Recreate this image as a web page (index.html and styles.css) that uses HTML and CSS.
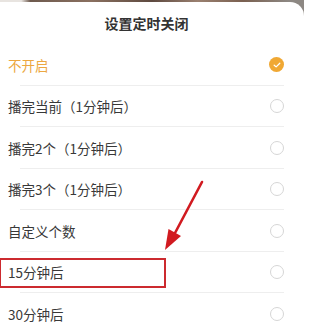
FILE: index.html
```html
<!DOCTYPE html>
<html lang="zh-CN">
<head>
<meta charset="utf-8">
<title>设置定时关闭</title>
<link rel="stylesheet" href="styles.css">
</head>
<body>
<div class="screen">
  <div class="backdrop"></div>
  <div class="sheet">
    <h1 class="title">设置定时关闭</h1>
    <ul class="options">
      <li class="option active"><span class="label">不开启</span><span class="radio checked"><svg viewBox="0 0 16 16" width="10" height="10"><path d="M3.5 8.3 L6.6 11 L12.5 5.2" fill="none" stroke="#fff" stroke-width="2" stroke-linecap="round" stroke-linejoin="round"/></svg></span></li>
      <li class="option"><span class="label">播完当前（1分钟后）</span><span class="radio"></span></li>
      <li class="option"><span class="label">播完2个（1分钟后）</span><span class="radio"></span></li>
      <li class="option"><span class="label">播完3个（1分钟后）</span><span class="radio"></span></li>
      <li class="option"><span class="label">自定义个数</span><span class="radio"></span></li>
      <li class="option"><span class="label">15分钟后</span><span class="radio"></span></li>
      <li class="option"><span class="label">30分钟后</span><span class="radio"></span></li>
    </ul>
  </div>
  <div class="highlight"></div>
  <svg class="arrow" width="304" height="327" viewBox="0 0 304 327">
    <line x1="202" y1="182" x2="175" y2="233" stroke="#d11a20" stroke-width="2.6" stroke-linecap="round"/>
    <polygon points="165,250 181,236 168.5,229" fill="#d11a20"/>
  </svg>
</div>
</body>
</html>
```

FILE: styles.css
```css
html, body {
  margin: 0;
  padding: 0;
}

body {
  width: 304px;
  height: 327px;
  overflow: hidden;
  background: #ffffff;
  font-family: "Noto Sans CJK SC", "Noto Sans", sans-serif;
}

.screen {
  position: relative;
  width: 304px;
  height: 327px;
  overflow: hidden;
  background: #8d8883;
}

.backdrop {
  height: 2px;
  background: linear-gradient(90deg, #e8e4e0 0%, #e8e4e0 7%, #6e5a4e 10%, #8a7060 30%, #5e4a40 50%, #9a8070 65%, #7a6050 80%, #8d8883 95%);
}

.sheet {
  background: #ffffff;
  border-top-right-radius: 14px;
  height: 325px;
}

.title {
  margin: 0;
  height: 42.25px;
  line-height: 42px;
  padding-right: 11px;
  text-align: center;
  font-size: 14px;
  font-weight: 700;
  color: #333333;
}

.options {
  list-style: none;
  margin: 0;
  padding: 0;
}

.option {
  display: flex;
  align-items: center;
  justify-content: space-between;
  height: 40.5px;
  padding: 0 20px 1px 8px;
  background: linear-gradient(#eeeeee, #eeeeee) no-repeat;
  background-size: 264px 1px;
  background-position: 20px 100%;
  font-size: 13.5px;
  color: #383838;
}

.option.active {
  color: #eca741;
}

.radio {
  box-sizing: border-box;
  width: 14px;
  height: 14px;
  border: 1px solid #d6d6d6;
  border-radius: 50%;
  display: flex;
  align-items: center;
  justify-content: center;
}

.radio.checked {
  width: 15px;
  height: 15px;
  border: none;
  background: #f0a834;
}

.highlight {
  position: absolute;
  left: -1px;
  top: 258px;
  width: 167px;
  height: 30px;
  box-sizing: border-box;
  border: 2px solid #cc2a2f;
}

.arrow {
  position: absolute;
  left: 0;
  top: 0;
}
```
